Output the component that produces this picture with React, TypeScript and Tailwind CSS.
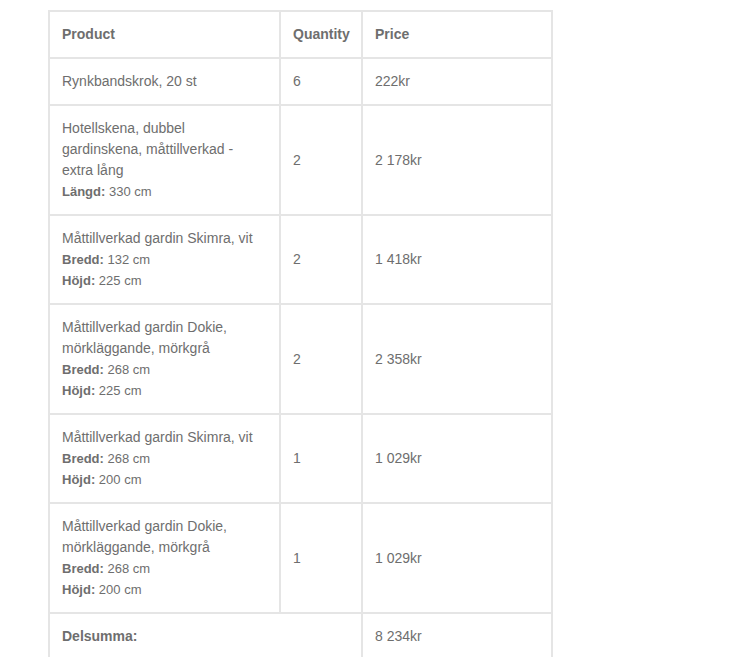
import React from "react";

type Meta = { label: string; value: string };
type Item = { name: string; meta: Meta[]; qty: string; price: string };

const items: Item[] = [
  { name: "Rynkbandskrok, 20 st", meta: [], qty: "6", price: "222kr" },
  {
    name: "Hotellskena, dubbel gardinskena, måttillverkad - extra lång",
    meta: [{ label: "Längd:", value: "330 cm" }],
    qty: "2",
    price: "2 178kr",
  },
  {
    name: "Måttillverkad gardin Skimra, vit",
    meta: [
      { label: "Bredd:", value: "132 cm" },
      { label: "Höjd:", value: "225 cm" },
    ],
    qty: "2",
    price: "1 418kr",
  },
  {
    name: "Måttillverkad gardin Dokie, mörkläggande, mörkgrå",
    meta: [
      { label: "Bredd:", value: "268 cm" },
      { label: "Höjd:", value: "225 cm" },
    ],
    qty: "2",
    price: "2 358kr",
  },
  {
    name: "Måttillverkad gardin Skimra, vit",
    meta: [
      { label: "Bredd:", value: "268 cm" },
      { label: "Höjd:", value: "200 cm" },
    ],
    qty: "1",
    price: "1 029kr",
  },
  {
    name: "Måttillverkad gardin Dokie, mörkläggande, mörkgrå",
    meta: [
      { label: "Bredd:", value: "268 cm" },
      { label: "Höjd:", value: "200 cm" },
    ],
    qty: "1",
    price: "1 029kr",
  },
];

const cell = "border border-[#e5e5e5] p-3 text-left align-middle";

export default function App() {
  return (
    <div
      className="min-h-[657px] bg-white pl-[48px] pt-[10px] text-[14px] leading-[21px] text-[#6e6e6e]"
      style={{ fontFamily: '"Liberation Sans", Arial, Helvetica, sans-serif' }}
    >
      <table className="w-[505px] table-fixed border-separate border-spacing-0 border border-[#e5e5e5]">
        <thead>
          <tr>
            <th className={`${cell} w-[231px] font-bold`}>Product</th>
            <th className={`${cell} w-[82px] font-bold`}>Quantity</th>
            <th className={`${cell} w-[190px] font-bold`}>Price</th>
          </tr>
        </thead>
        <tbody>
          {items.map((it, i) => (
            <tr key={i}>
              <td className={`${cell} break-words`}>
                <div>{it.name}</div>
                {it.meta.map((m, j) => (
                  <div key={j} className="text-[13px]">
                    <strong className="font-bold">{m.label}</strong> {m.value}
                  </div>
                ))}
              </td>
              <td className={cell}>{it.qty}</td>
              <td className={cell}>{it.price}</td>
            </tr>
          ))}
        </tbody>
        <tfoot>
          <tr>
            <th colSpan={2} className={`${cell} font-bold`}>
              Delsumma:
            </th>
            <td className={cell}>8 234kr</td>
          </tr>
        </tfoot>
      </table>
    </div>
  );
}
